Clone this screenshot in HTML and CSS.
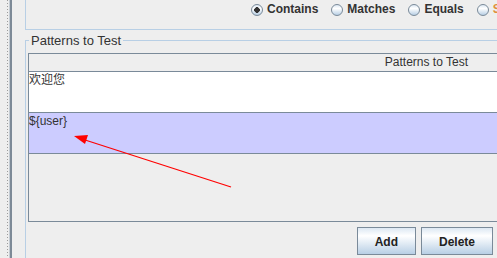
FILE: index.html
```html
<!DOCTYPE html>
<html lang="en">
<head>
  <meta charset="UTF-8">
  <title>Patterns to Test</title>
  <link rel="stylesheet" href="styles.css">
</head>
<body>
  <div class="window">
    <div class="side-bar">
      <div class="dots"></div>
      <div class="edge"></div>
    </div>

    <div class="content">
      <div class="options">
        <label class="radio"><span class="circle checked"></span>Contains</label>
        <label class="radio"><span class="circle"></span>Matches</label>
        <label class="radio"><span class="circle"></span>Equals</label>
        <label class="radio focus"><span class="circle"></span>Substring</label>
      </div>

      <fieldset class="patterns">
        <legend>Patterns to Test</legend>

        <div class="table-box">
          <div class="table-head">Patterns to Test</div>
          <div class="row cjk">欢迎您</div>
          <div class="row selected">${user}</div>
        </div>

        <div class="buttons">
          <button>Add</button>
          <button>Delete</button>
        </div>
      </fieldset>
    </div>
  </div>

  <!-- annotation drawn over the screenshot -->
  <svg class="arrow" width="497" height="258" viewBox="0 0 497 258">
    <line x1="231" y1="187" x2="82" y2="139" stroke="#ff0000" stroke-width="1.2"/>
    <polygon points="74,136 88,135 85,144" fill="#ff0000"/>
  </svg>
</body>
</html>
```

FILE: styles.css
```css
body {
  margin: 0;
  width: 497px;
  height: 258px;
  overflow: hidden;
  position: relative;
  background: #eeeeee;
  font-family: "Liberation Sans", Arial, sans-serif;
  font-size: 12px;
  color: #333333;
}
.window {
  display: flex;
  height: 258px;
}
.side-bar {
  width: 13px;
  flex-shrink: 0;
  display: flex;
}
.dots {
  width: 1px;
  margin-left: 7px;
  background: repeating-linear-gradient(to bottom, #9c9c9c 0 1px, transparent 1px 3px);
}
.edge {
  width: 2px;
  margin-left: 2px;
  background: #7d8a97;
  box-shadow: -1px 0 0 #c4ccd4;
}
.content {
  flex: 1;
  min-width: 0;
  padding-left: 12px;
}
.options {
  height: 30px;
  box-sizing: border-box;
  border-left: 1px solid #b8cfe5;
  border-bottom: 1px solid #b8cfe5;
  padding: 2px 0 0 225px;
  display: flex;
  align-items: flex-start;
  white-space: nowrap;
  overflow: hidden;
}
.radio {
  display: flex;
  align-items: flex-start;
  gap: 4px;
  margin-right: 13px;
  font-weight: bold;
  line-height: 14px;
}
.radio.focus { color: #e0903a; }
.circle {
  width: 12px;
  height: 12px;
  margin-top: 2px;
  box-sizing: border-box;
  border: 1px solid #7a8a99;
  border-radius: 50%;
  background: linear-gradient(#dde8f3, #ffffff 35%, #b8cfe5);
  flex-shrink: 0;
}
.circle.checked {
  background: radial-gradient(circle, #333333 0 2.6px, transparent 3px), linear-gradient(#dde8f3, #ffffff 35%, #b8cfe5);
}
.patterns {
  margin: 3px 0 0 0;
  padding: 5px 0 0 2px;
  min-width: 0;
  height: 225px;
  box-sizing: border-box;
  border: 1px solid #b8cfe5;
  border-right: none;
  border-bottom: none;
}
.patterns legend {
  margin-left: 1px;
  padding: 0 2px;
  font-size: 13px;
  line-height: 15px;
  color: #333333;
}
.table-box {
  height: 169px;
  box-sizing: border-box;
  border: 1px solid #7a8a99;
  border-right: none;
}
.table-head {
  height: 17px;
  line-height: 17px;
  border-bottom: 1px solid #7a8a99;
  text-align: right;
  padding-right: 29px;
}
.row {
  height: 39px;
  padding-top: 1px;
  border-bottom: 1px solid #7a8a99;
  background: #ffffff;
  line-height: 15px;
}
.row.cjk {
  font-family: "Liberation Sans", "Noto Sans CJK SC", sans-serif;
}
.row.selected {
  background: #ccccff;
}
.buttons {
  display: flex;
  justify-content: flex-end;
  gap: 5px;
  margin-top: 5px;
  padding-right: 4px;
}
.buttons button {
  height: 28px;
  padding: 1px 17px 0;
  border: 1px solid #7a8a99;
  border-radius: 0;
  background: linear-gradient(#dde8f3, #ffffff 30%, #b8cfe5);
  font-family: "Liberation Sans", Arial, sans-serif;
  font-size: 12px;
  font-weight: bold;
  color: #222222;
}
.arrow {
  position: absolute;
  top: 0;
  left: 0;
  pointer-events: none;
}
```
